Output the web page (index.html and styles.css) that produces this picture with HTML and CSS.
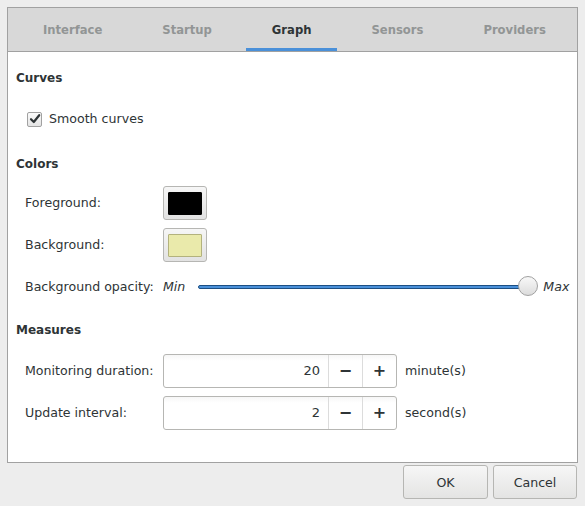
FILE: index.html
```html
<!DOCTYPE html>
<html>
<head>
<meta charset="utf-8">
<link rel="stylesheet" href="styles.css">
</head>
<body>
<div class="frame">
  <div class="tabs">
    <div class="tab">Interface</div>
    <div class="tab">Startup</div>
    <div class="tab active">Graph</div>
    <div class="tab">Sensors</div>
    <div class="tab">Providers</div>
  </div>
  <div class="content">
    <div class="head">Curves</div>
    <div class="check-row">
      <span class="checkbox">
        <svg width="12" height="12" viewBox="0 0 12 12"><path d="M2 6.2 L4.8 9 L10.2 2.2" fill="none" stroke="#2e3436" stroke-width="2.2" stroke-linecap="round" stroke-linejoin="round"/></svg>
      </span>
      <span class="label">Smooth curves</span>
    </div>
    <div class="head colors-head">Colors</div>
    <div class="rows rows-colors">
      <div class="label">Foreground:</div>
      <div><span class="colorbtn"><span class="swatch black"></span></span></div>
      <div class="label">Background:</div>
      <div><span class="colorbtn"><span class="swatch yellow"></span></span></div>
      <div class="label">Background opacity:</div>
      <div class="slider-row">
        <span class="mark">Min</span>
        <span class="track"><span class="knob"></span></span>
        <span class="mark">Max</span>
      </div>
    </div>
    <div class="head measures-head">Measures</div>
    <div class="rows rows-measures">
      <div class="label">Monitoring duration:</div>
      <div class="spin-row">
        <span class="spin"><span class="entry">20</span><span class="sbtn">&minus;</span><span class="sbtn">+</span></span>
        <span class="unit">minute(s)</span>
      </div>
      <div class="label">Update interval:</div>
      <div class="spin-row">
        <span class="spin"><span class="entry">2</span><span class="sbtn">&minus;</span><span class="sbtn">+</span></span>
        <span class="unit">second(s)</span>
      </div>
    </div>
  </div>
</div>
<div class="footer">
  <button class="btn ok">OK</button>
  <button class="btn cancel">Cancel</button>
</div>
</body>
</html>
```

FILE: styles.css
```css
html, body {
  margin: 0;
  padding: 0;
}
body {
  width: 585px;
  height: 506px;
  background: #ededed;
  font-family: "DejaVu Sans", sans-serif;
  font-size: 12.6px;
  color: #2e3436;
  overflow: hidden;
}
.frame {
  margin: 7px 7px 0 7px;
  height: 454px;
  border: 1px solid #a1a1a1;
  background: #ffffff;
}
.tabs {
  display: flex;
  gap: 8px;
  height: 43px;
  padding-left: 9px;
  background: #d8d8d8;
  border-bottom: 1px solid #a1a1a1;
}
.tab {
  padding: 2px 26px 0 26px;
  line-height: 41px;
  font-weight: bold;
  font-size: 11.6px;
  color: #929595;
}
.tab.active {
  color: #2e3436;
  box-shadow: inset 0 -3px 0 #4a90d9;
}
.content {
  padding: 16px 8px 0 8px;
}
.head {
  height: 20px;
  line-height: 20px;
  font-weight: bold;
  font-size: 12px;
}
.check-row {
  margin-top: 21px;
  height: 20px;
  display: flex;
  align-items: center;
  padding-left: 11px;
  gap: 7px;
}
.checkbox {
  width: 13px;
  height: 13px;
  border: 1px solid #a1a1a1;
  border-radius: 2px;
  background: linear-gradient(#fbfbfb, #e4e4e4);
  display: flex;
  align-items: center;
  justify-content: center;
}
.label {
  line-height: 20px;
}
.colors-head {
  margin-top: 25px;
}
.rows {
  display: grid;
  grid-template-columns: 138px 1fr;
  grid-auto-rows: 34px;
  row-gap: 8px;
  padding-left: 9px;
  align-items: center;
}
.rows-colors {
  margin-top: 12px;
}
.colorbtn {
  display: flex;
  width: 42px;
  height: 32px;
  border: 1px solid #b6b6b3;
  border-radius: 3px;
  background: linear-gradient(#f6f6f6, #e2e2e2);
  align-items: center;
  justify-content: center;
}
.swatch {
  width: 32px;
  height: 21px;
  border: 1px solid;
  border-radius: 1px;
}
.swatch.black {
  background: #000000;
  border-color: #000000;
}
.swatch.yellow {
  background: #eaeaab;
  border-color: #b3b27d;
}
.slider-row {
  display: flex;
  align-items: center;
}
.mark {
  font-style: italic;
  line-height: 20px;
}
.track {
  position: relative;
  margin-left: 13px;
  width: 330px;
  height: 2px;
  border: 1px solid #1c4f84;
  border-radius: 2px;
  background: #4a90d9;
  margin-right: 13px;
}
.knob {
  position: absolute;
  right: -9px;
  top: -10px;
  width: 20px;
  height: 20px;
  border: 1px solid #a1a1a1;
  border-radius: 50%;
  background: linear-gradient(#f8f8f8, #dcdcdc);
  box-sizing: border-box;
}
.measures-head {
  margin-top: 16px;
}
.rows-measures {
  margin-top: 14px;
}
.spin-row {
  display: flex;
  align-items: center;
  gap: 8px;
}
.spin {
  display: flex;
  height: 32px;
  width: 232px;
  border: 1px solid #b6b6b3;
  border-radius: 3px;
  background: linear-gradient(#f6f6f6 0, #ffffff 6px);
  overflow: hidden;
}
.entry {
  flex: 1;
  text-align: right;
  line-height: 32px;
  padding-right: 8px;
  font-size: 13px;
}
.sbtn {
  width: 33px;
  border-left: 1px solid #dcdcdc;
  text-align: center;
  line-height: 32px;
  font-size: 16px;
  font-weight: bold;
  color: #2e3436;
}
.unit {
  line-height: 20px;
}
.footer {
  display: flex;
  justify-content: flex-end;
  gap: 5px;
  margin: 2px 8px 0 0;
}
.btn {
  height: 34px;
  border: 1px solid #b6b6b3;
  border-radius: 3px;
  background: linear-gradient(#f6f6f6, #e4e4e3);
  font-family: "DejaVu Sans", sans-serif;
  font-size: 12.6px;
  color: #2e3436;
  padding: 0;
}
.btn.ok { width: 85px; }
.btn.cancel { width: 84px; }
```
